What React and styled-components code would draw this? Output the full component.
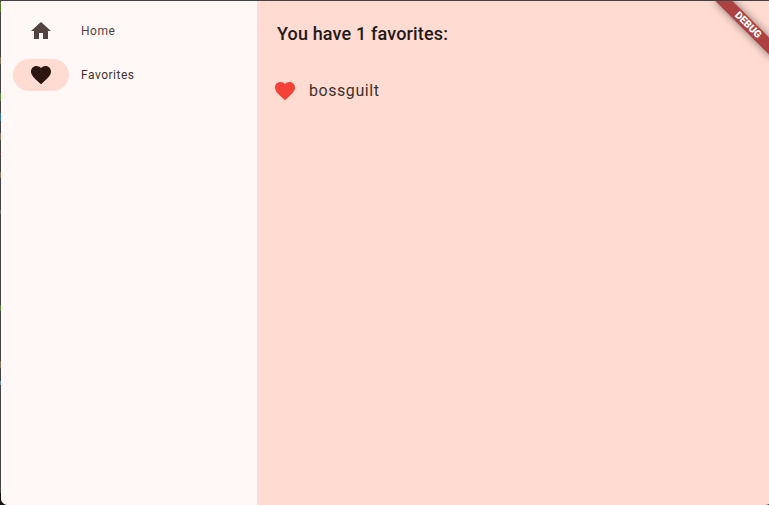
import React from 'react';
import styled, { createGlobalStyle } from 'styled-components';

const GlobalStyle = createGlobalStyle`
  * { box-sizing: border-box; }
  html, body { margin: 0; overflow: hidden; }
  body { font-family: Roboto, sans-serif; background: #3f3d3c; }
`;

const Desktop = styled.div`
  width: 100vw;
  height: 100vh;
  padding: 1px 0 0 1px;
  overflow: hidden;
  background:
    linear-gradient(#567b2b, #567b2b) 0 2px / 1px 10px no-repeat,
    linear-gradient(#84705a, #84705a) 0 57px / 1px 7px no-repeat,
    linear-gradient(#4f8a3c, #4f8a3c) 0 93px / 1px 8px no-repeat,
    linear-gradient(#3274a8, #3274a8) 0 113px / 1px 8px no-repeat,
    linear-gradient(#84705a, #84705a) 0 133px / 1px 7px no-repeat,
    linear-gradient(#8a3a52, #8a3a52) 0 153px / 1px 2px no-repeat,
    linear-gradient(#84705a, #84705a) 0 172px / 1px 6px no-repeat,
    linear-gradient(#5e6a6a, #5e6a6a) 0 210px / 1px 4px no-repeat,
    linear-gradient(#5b8435, #5b8435) 0 305px / 1px 6px no-repeat,
    linear-gradient(#84705a, #84705a) 0 361px / 1px 7px no-repeat,
    linear-gradient(#6a94a8, #6a94a8) 0 381px / 1px 4px no-repeat,
    linear-gradient(#171412, #171412) 0 100% / 12px 12px no-repeat,
    #414344;
`;

const Window = styled.div`
  position: relative;
  display: flex;
  width: 771px;
  height: 504px;
  overflow: hidden;
  border-radius: 0 0 7px 7px;
  background: #ffdbd1;
`;

const Rail = styled.nav`
  display: flex;
  flex-direction: column;
  gap: 12px;
  width: 256px;
  padding: 14px 12px;
  background: #fff8f6;
`;

const Destination = styled.a`
  display: flex;
  align-items: center;
  gap: 12px;
  height: 32px;
  font-size: 12px;
  line-height: 16px;
  letter-spacing: 0.52px;
  color: ${({ $active }) => ($active ? '#40322f' : '#53433f')};
`;

const Indicator = styled.span`
  display: grid;
  place-items: center;
  width: 56px;
  height: 32px;
  border-radius: 16px;
  background: ${({ $active }) => ($active ? '#ffdbd1' : 'transparent')};
  color: ${({ $active }) => ($active ? '#2c160f' : '#53433f')};
`;

const Glyph = styled.svg`
  display: block;
  width: 24px;
  height: 24px;
  fill: currentColor;
`;

const Content = styled.main`
  flex: 1;
  padding: 20px;
  color: #231917;
`;

const Heading = styled.h1`
  margin: 0;
  font-size: 18px;
  line-height: 26px;
  font-weight: 500;
  letter-spacing: 0.15px;
`;

const List = styled.ul`
  margin: 32px 0 0 -4px;
  padding: 0;
  list-style: none;
`;

const Favorite = styled.li`
  display: flex;
  align-items: center;
  gap: 12px;
  height: 24px;
  color: #3d302d;
  font-size: 16px;
  line-height: 24px;
  letter-spacing: 0.56px;

  ${Glyph} { color: #f44336; }
`;

const Ribbon = styled.div`
  position: absolute;
  top: 28px;
  right: -40px;
  width: 80px;
  height: 12px;
  transform: rotate(45deg);
  transform-origin: 40px -28px;
  background: #ad4141;
  box-shadow: 0 0 9px rgba(0, 0, 0, 0.5);
  color: #fff;
  font-size: 10.2px;
  line-height: 12px;
  font-weight: 900;
  text-align: center;
`;

const HOME = 'M10 20v-6h4v6h5v-8h3L12 3 2 12h3v8z';
const HEART =
  'M12 21.35l-1.45-1.32C5.4 15.36 2 12.28 2 8.5 2 5.42 4.42 3 7.5 3c1.74 0 3.41.81 4.5 2.09C13.09 3.81 14.76 3 16.5 3 19.58 3 22 5.42 22 8.5c0 3.78-3.4 6.86-8.55 11.54L12 21.35z';

const destinations = [
  { label: 'Home', icon: HOME, active: false },
  { label: 'Favorites', icon: HEART, active: true },
];

const favorites = ['bossguilt'];

function Icon({ path }) {
  return (
    <Glyph viewBox="0 0 24 24" aria-hidden="true">
      <path d={path} />
    </Glyph>
  );
}

export default function App() {
  return (
    <>
      <GlobalStyle />
      <Desktop>
        <Window>
          <Rail>
            {destinations.map(({ label, icon, active }) => (
              <Destination key={label} $active={active}>
                <Indicator $active={active}>
                  <Icon path={icon} />
                </Indicator>
                {label}
              </Destination>
            ))}
          </Rail>
          <Content>
            <Heading>You have {favorites.length} favorites:</Heading>
            <List>
              {favorites.map((name) => (
                <Favorite key={name}>
                  <Icon path={HEART} />
                  <span>{name}</span>
                </Favorite>
              ))}
            </List>
          </Content>
          <Ribbon>DEBUG</Ribbon>
        </Window>
      </Desktop>
    </>
  );
}
